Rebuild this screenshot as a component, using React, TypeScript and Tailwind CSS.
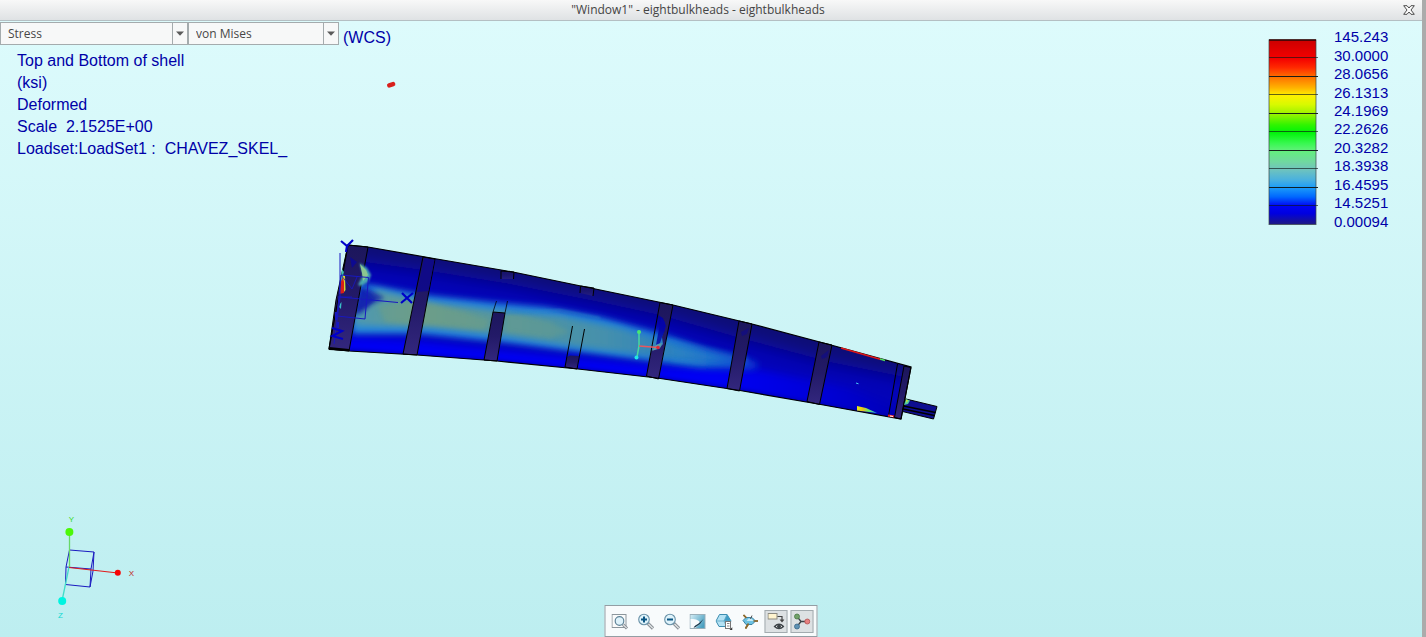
import type { ReactNode } from "react";

const legendValues = [
  "145.243",
  "30.0000",
  "28.0656",
  "26.1313",
  "24.1969",
  "22.2626",
  "20.3282",
  "18.3938",
  "16.4595",
  "14.5251",
  "0.00094",
];

const legendStops: [string, string][] = [
  ["0%", "#cc0000"],
  ["10%", "#f40000"],
  ["15%", "#ff2a00"],
  ["20%", "#ff7000"],
  ["26%", "#ffb400"],
  ["30%", "#fff000"],
  ["35%", "#d8fa00"],
  ["40%", "#9cf200"],
  ["46%", "#30f400"],
  ["50%", "#00f408"],
  ["56%", "#38f850"],
  ["60%", "#62f07c"],
  ["66%", "#70d8a0"],
  ["70%", "#70c4bc"],
  ["76%", "#48b0e0"],
  ["80%", "#1c9cf8"],
  ["85%", "#0068ff"],
  ["90%", "#0004f4"],
  ["94%", "#0000e0"],
  ["100%", "#201a80"],
];

function Combo({ label, options, className }: { label: string; options: string[]; className: string }) {
  return (
    <div className={`relative border border-[#a4abad] bg-[#f7f8f8] ${className}`}>
      <select
        aria-label={label}
        className="block h-[21px] w-full appearance-none bg-transparent pl-[7px] pr-5 text-xs text-[#474747] outline-none"
      >
        {options.map((o) => (
          <option key={o}>{o}</option>
        ))}
      </select>
      <span className="pointer-events-none absolute inset-y-0 right-0 flex w-[15px] items-center justify-center border-l border-[#a4abad]">
        <svg width="8" height="5" viewBox="0 0 8 5" aria-hidden="true">
          <path d="M0 0.500h8L4 4.800z" fill="#5a5a5a" />
        </svg>
      </span>
    </div>
  );
}

function Legend() {
  return (
    <div className="flex gap-4 pt-[7px]">
      <svg className="mt-[11px]" width="50" height="187" viewBox="0 0 50 187" role="img" aria-label="Stress scale">
        <defs>
          <linearGradient id="scale" x1="0" y1="0" x2="0" y2="1">
            {legendStops.map(([offset, color]) => (
              <stop key={offset} offset={offset} stopColor={color} />
            ))}
          </linearGradient>
        </defs>
        <rect x="1" y="1" width="47" height="184.500" fill="url(#scale)" stroke="#3a4444" strokeOpacity="0.700" />
        {legendValues.slice(1, -1).map((v, i) => (
          <path
            key={v}
            d={`M1 ${Math.round(1 + (i + 1) * 18.45) - 0.5}H50.5`}
            stroke="#101818"
            strokeOpacity={i % 2 ? 0.95 : 0.65}
          />
        ))}
        <path d="M1 1h47" stroke="#300" strokeWidth="1.400" />
      </svg>
      <ol className="grid h-[203px] w-14 auto-rows-fr items-center text-[15px] leading-4">
        {legendValues.map((v) => (
          <li key={v}>{v}</li>
        ))}
      </ol>
    </div>
  );
}

const hull =
  "M348 245L368 247L431 258L513 272L593 288.500L673 305L752 324L831 345L911 367L901 419L818 404L740 390.500L657 378L578 369L497 361L417 355L349 351L329 349Z";

function Model() {
  return (
    <svg
      className="absolute left-[320px] top-[49px]"
      width="630"
      height="360"
      viewBox="320 70 630 360"
      role="img"
      aria-label="Deformed shell model"
    >
      <defs>
        <clipPath id="hull">
          <path d={hull} />
        </clipPath>
        <filter id="b1" x="-20%" y="-20%" width="140%" height="140%">
          <feGaussianBlur stdDeviation="1" />
        </filter>
        <filter id="b2" x="-20%" y="-40%" width="140%" height="180%">
          <feGaussianBlur stdDeviation="2.200" />
        </filter>
        <filter id="b3" x="-20%" y="-40%" width="140%" height="180%">
          <feGaussianBlur stdDeviation="3.200" />
        </filter>
        <filter id="b4" x="-20%" y="-40%" width="140%" height="180%">
          <feGaussianBlur stdDeviation="4.500" />
        </filter>
        <filter id="b8" x="-20%" y="-60%" width="140%" height="220%">
          <feGaussianBlur stdDeviation="9" />
        </filter>
        <linearGradient id="bandOuter" gradientUnits="userSpaceOnUse" x1="350" y1="0" x2="755" y2="0">
          <stop offset="0" stopColor="#2384dc" />
          <stop offset="0.650" stopColor="#1f80dc" />
          <stop offset="0.850" stopColor="#146cd4" />
          <stop offset="1" stopColor="#0c48d8" stopOpacity="0.700" />
        </linearGradient>
        <linearGradient id="bandInner" gradientUnits="userSpaceOnUse" x1="350" y1="0" x2="740" y2="0">
          <stop offset="0" stopColor="#4a98b4" />
          <stop offset="0.180" stopColor="#669c90" />
          <stop offset="0.400" stopColor="#5496a0" />
          <stop offset="0.650" stopColor="#4590ac" />
          <stop offset="0.850" stopColor="#2a80c0" />
          <stop offset="1" stopColor="#1868cc" stopOpacity="0.600" />
        </linearGradient>
        <linearGradient id="lower" gradientUnits="userSpaceOnUse" x1="330" y1="0" x2="905" y2="0">
          <stop offset="0" stopColor="#0000f4" />
          <stop offset="0.680" stopColor="#0000f4" />
          <stop offset="0.850" stopColor="#0202d8" />
          <stop offset="1" stopColor="#0404b4" />
        </linearGradient>
        <linearGradient id="rib" x1="0" y1="0" x2="0" y2="1">
          <stop offset="0" stopColor="#1c165c" />
          <stop offset="0.500" stopColor="#231a68" />
          <stop offset="1" stopColor="#33277e" />
        </linearGradient>
        <linearGradient id="hot" x1="0" y1="0" x2="1" y2="0">
          <stop offset="0" stopColor="#e8f010" />
          <stop offset="0.300" stopColor="#e8c020" />
          <stop offset="0.550" stopColor="#70e860" />
          <stop offset="1" stopColor="#20b0f0" />
        </linearGradient>
      </defs>

      <rect x="387" y="82.500" width="8.500" height="4.600" rx="2.200" fill="#d8201c" transform="rotate(-17 391 85)" />

      <g clipPath="url(#hull)">
        <path d={hull} fill="#0303b8" />
        {/* dark upper skin */}
        <path
          d="M335 225L520 250L760 305L925 350L920 380L830 362L740 338L660 315L590 300L510 284L430 271L350 260Z"
          fill="#0f0a74"
          filter="url(#b8)"
        />
        {/* bright lower skin */}
        <path
          d="M340 336L420 341L500 350L580 358L660 366L760 370L850 388L900 408L900 425L815 410L740 396L655 384L575 374L495 366L330 356Z"
          fill="url(#lower)"
          filter="url(#b4)"
        />
        <path
          d="M330 350L417 356L497 362L578 370L657 379L740 391L901 420"
          fill="none"
          stroke="#0a0aa0"
          strokeWidth="3"
          filter="url(#b2)"
        />
        {/* stress band */}
        <path
          d="M352 284L372 285L425 295L500 303L545 307L600 317L660 333L705 348L752 360L760 366L750 370L700 368L650 361L580 352L500 342L420 334L352 334Z"
          fill="url(#bandOuter)"
          filter="url(#b3)"
        />
        <path
          d="M356 302L378 290L425 302L500 311L560 316L620 328L680 346L740 360L700 363L650 356L580 347L500 335L430 327L354 326Z"
          fill="url(#bandInner)"
          filter="url(#b3)"
        />
        <path d="M378 306L420 300L490 320L484 330L430 325L385 322Z" fill="#74a080" opacity="0.450" filter="url(#b2)" />
        <path d="M506 312L550 322L570 332L550 338L506 332Z" fill="#74a080" opacity="0.350" filter="url(#b2)" />
        <path d="M506 313L560 310L600 318" fill="none" stroke="#2c88c8" strokeWidth="2" opacity="0.500" filter="url(#b1)" />
        <path
          d="M670 340L748 358M672 351L748 361M672 360L745 365"
          stroke="#2a8ad4"
          strokeWidth="2"
          opacity="0.500"
          filter="url(#b2)"
        />
        {/* cool wedge beside the root rib */}
        <path d="M360 287L368 288L384 298L372 304L360 314L352 314Z" fill="#0812a8" opacity="0.750" filter="url(#b2)" />
        <path d="M361 289L369 294L375 300L366 307L358 310Z" fill="#0a18b4" opacity="0.500" filter="url(#b1)" />
      </g>

      <g stroke="#000" strokeWidth="1" fill="url(#rib)" strokeLinejoin="round">
        <path d="M348 245L368 247L349 351L329 349L336 300Z" />
        <path d="M423 257L435 259L417 355L403 354Z" />
        <path d="M493 312L505 313L497 361L484 360Z" />
        <path d="M739 321L752 324L739.500 391L727 388.500Z" />
        <path d="M819 342L832 345L819.500 404.500L807 401.500Z" />
        <path d="M493 312L496.500 301M505 313L507.500 301" fill="none" strokeOpacity="0.750" />
        <path d="M501 279V271L514 272L513.500 279" fillOpacity="0.600" />
        <path d="M580 293L580.500 286L594 288L593 296" fillOpacity="0.600" />
        <path d="M567 357L570 355.500L579 356L577 369L565 367Z" stroke="none" />
        <path d="M572.500 326L565 367L577 369L584.500 329" fill="none" />
        <path
          d="M660 303L673 305L664 350L658.500 379L646.500 376L651.500 350L659 349L663 344L662 337L666 326L663 318L658 315Z"
          stroke="none"
        />
        <path d="M660 302.500L673 305L658.500 379L646.500 376Z" fill="none" />
        <path d="M904 366L911 367.500L901 419L894.500 417.500Z" />
        <path d="M897.500 364L888.500 416" fill="none" />
      </g>
      <path d="M661 318L665 322L665 330L662 337L660 343L656 345Z" fill="#0505a8" opacity="0.800" />
      <path d="M656 345L662 343L660 348L652 351Z" fill="#5c9aa8" />
      <path d="M424 258L434.500 260L428.500 291L417 292Z" fill="#0c0890" opacity="0.800" />
      <path d="M741 332L749 328L747 334L742 336Z" fill="#100c88" opacity="0.700" />
      <path d="M821 356L829 350L827 357L822 359Z" fill="#100c88" opacity="0.700" />

      {/* root stress concentration */}
      <path d="M359.500 263L367 268L371 275L368 282L361 286L358 285L363 275Z" fill="#48a8b0" filter="url(#b1)" />
      <path d="M360 264L366 270L368 275L363 281L362 273Z" fill="#8cc890" />
      <path d="M350 257L357 262L352 268Z" fill="#0d0a90" />

      <path d={hull} fill="none" stroke="#000" strokeWidth="1.200" />
      <path d="M329 347L349 349L350 351L329 350Z" fill="#000" />

      <path d="M841 348L881 359.500" stroke="#e01818" strokeWidth="1.400" />
      <path d="M880 359L885 360.500" stroke="#50e060" strokeWidth="1.400" />
      <path d="M857 406L866 408L877 413L857 410.500Z" fill="url(#hot)" />
      <path d="M888 415.500L894 416.500" stroke="#f02020" strokeWidth="2" />
      <path d="M890 416L893 416.500" stroke="#fff" strokeWidth="1" />
      <path d="M856 383L858.500 383.800" stroke="#48c8f8" strokeWidth="1" />

      {/* tail stub */}
      <path d="M906 399L937 406.500L933.500 419L902.500 411.500Z" fill="#0e0e90" stroke="#000" />
      <path d="M903.500 406L935.500 412.500M903 409L934.500 415.500" stroke="#000" strokeWidth="1.300" />
      <path d="M906 399L910 400.500L908 404L904 405Z" fill="#50c8a0" />
      <path d="M906 399.500L908 400.500L906.500 403Z" fill="#d8e830" />

      {/* hot spot on the root edge */}
      <path d="M342 275L344.500 279L344 293L339 294Z" fill="#d82018" />
      <path d="M342 274L345 276L345.500 290L344 292L344 282Z" fill="#d8d830" />
      <path d="M342 269L344 272L342 279L340 284Z" fill="#38c0b0" />
      <path d="M340 304L341.500 302L341 309L339 307Z" fill="#38c0c8" />

      {/* part coordinate system */}
      <g fill="none" stroke="#1818c0" strokeWidth="1">
        <path d="M340 253V297L398 302.500M340 297L334 344" />
        <path d="M341 275L368.500 277.500L365 319L337 316Z" />
        <path d="M338 297H352M341 275L352 289L357 277" strokeOpacity="0.800" />
        <path d="M336 312V320M338 322V328" strokeWidth="2" />
      </g>
      <g fill="none" stroke="#0000c8" strokeWidth="2.200">
        <path d="M341 241L347 246L353 240M347 246L346 252" />
        <path d="M402 293L412 303M413 293L401 303" />
        <path d="M332 328L342 331L332.500 336L343 339" />
      </g>

      {/* spin centre */}
      <path d="M639 332V346L637 357" fill="none" stroke="#48d8a0" strokeWidth="1.500" />
      <path d="M639 346L658 347.500" stroke="#e85860" strokeWidth="1.500" />
      <circle cx="639" cy="332" r="2" fill="#48e870" />
      <circle cx="636.500" cy="357.500" r="2" fill="#20e8e8" />
      <circle cx="658" cy="347.500" r="1.800" fill="#e02838" />
    </svg>
  );
}

function Triad() {
  return (
    <svg
      className="absolute bottom-4 left-[50px]"
      width="90"
      height="110"
      viewBox="50 511 90 110"
      role="img"
      aria-label="Orientation axes"
    >
      <g fill="none" stroke="#1a1ac0" strokeWidth="1">
        <path d="M69.500 550L94 552L91 569L66 567Z" />
        <path d="M66 567L65.500 584.500L90 587L91 569M94 552L93 571L90 587" />
      </g>
      <path d="M69.500 532V567" stroke="#68d868" strokeWidth="1.300" />
      <path d="M69 567L62 601" stroke="#40dcc8" strokeWidth="1.300" />
      <path d="M69 567.500L118 573" stroke="#e01c1c" strokeWidth="1.200" />
      <circle cx="69.400" cy="532" r="4" fill="#4cf808" />
      <circle cx="62.200" cy="601" r="4" fill="#00f4e0" />
      <circle cx="117.800" cy="572.800" r="3" fill="#f80404" />
      <g fontSize="8" textAnchor="middle">
        <text x="71.500" y="522" fill="#38d818">Y</text>
        <text x="131.500" y="576" fill="#c02020">X</text>
        <text x="60.500" y="618" fill="#10d8d0">Z</text>
      </g>
    </svg>
  );
}

function Magnifier({ sign }: { sign: string }) {
  return (
    <>
      <path d="M10.500 10.500L15.500 15.500" stroke="#858c92" strokeWidth="3.200" />
      <path d="M11 11L15.300 15.300" stroke="#e0e3e4" strokeWidth="1.400" />
      <circle cx="6.500" cy="6.500" r="5.300" fill="#dff3fb" stroke="#6a92a8" strokeWidth="1.100" />
      <path d={sign} stroke="#0b5684" strokeWidth="2" />
    </>
  );
}

const tools: { name: string; pressed?: boolean; art: ReactNode }[] = [
  {
    name: "Refit",
    art: (
      <>
        <rect x="0.500" y="1.500" width="14" height="13" fill="#fafbfb" stroke="#8c969c" />
        <path d="M11.500 11.500L15.500 15.500" stroke="#858c92" strokeWidth="3" />
        <path d="M11.500 11.500L15.200 15.200" stroke="#e0e3e4" strokeWidth="1.200" />
        <circle cx="8" cy="8" r="4.300" fill="#dff3fb" stroke="#5f8498" strokeWidth="1.200" />
      </>
    ),
  },
  { name: "Zoom in", art: <Magnifier sign="M3.500 6.500h6M6.500 3.500v6" /> },
  { name: "Zoom out", art: <Magnifier sign="M3.500 6.500h6" /> },
  {
    name: "Repaint",
    art: (
      <>
        <rect x="0.500" y="1.500" width="15" height="14" fill="url(#paint)" stroke="#9ab0ba" />
        <path d="M1 6C8 6 11 8 10 11L6 15H1Z" fill="#f6fbfd" />
        <path d="M14 6L10.500 11L5.500 14.500L4 14.500L5.500 12.800L9 10.500Z" fill="#1c3c50" />
      </>
    ),
  },
  {
    name: "Saved orientations",
    art: (
      <>
        <path d="M0.500 8L4 1.500H11.500L15.500 8L12 13.500H3.500Z" fill="#b4e2f4" stroke="#3d8db0" strokeLinejoin="round" />
        <path d="M11.500 1.500L15.500 8H8.500Z" fill="#3f9cc4" />
        <path d="M0.500 8H15.500M8.500 8L11.500 1.500M8.500 8L11 13.500" stroke="#5ca6c4" strokeWidth="0.800" />
        <rect x="10" y="8.500" width="5" height="7" fill="#fff" stroke="#777" />
        <path d="M11.500 10.500h2.500M11.500 13h2.500" stroke="#777" strokeWidth="0.900" />
        <path d="M17 14V17H14Z" fill="#333" />
      </>
    ),
  },
  {
    name: "Datum display filters",
    art: (
      <>
        <path d="M2 2L7 7M4 15.500L7.500 10M11 8H16.500" stroke="#8e6a2c" strokeWidth="1.700" />
        <path d="M1.500 7.500L4.500 4.500H10.500L14 8L10.500 11.500H4.500Z" fill="#6cc2e2" stroke="#3a83a6" strokeLinejoin="round" />
        <path d="M5 8L7 5.500H10L12 8Z" fill="#c4eaf8" />
        <path d="M2 2L5 5M4 15.500L7 10.500M12 8H16.500" stroke="#8e6a2c" strokeWidth="1.500" />
        <path d="M10.500 2.500L9 6" stroke="#555" />
      </>
    ),
  },
  {
    name: "Annotation display",
    pressed: true,
    art: (
      <>
        <rect x="0.500" y="0.500" width="9" height="5.500" fill="#fff4cf" stroke="#8c8a80" />
        <path d="M10 3.500H14.500V8" fill="none" stroke="#444" strokeWidth="1.200" />
        <path d="M12 6.500H17L14.500 9.500Z" fill="#444" />
        <path d="M7 13.500Q11.500 9 16 13.500Q11.500 17.500 7 13.500Z" fill="#fff" stroke="#3e4448" strokeWidth="1.300" />
        <circle cx="11.500" cy="13.300" r="1.900" fill="#3e4448" />
      </>
    ),
  },
  {
    name: "Spin center",
    pressed: true,
    art: (
      <>
        <path d="M3.500 3.500L7.500 8.500L13.500 8.500M7.500 8.500L3.500 13.500" fill="none" stroke="#3b4246" strokeWidth="1.300" />
        <circle cx="3.500" cy="3.500" r="2.500" fill="#72a26a" stroke="#4a7846" strokeWidth="0.800" />
        <circle cx="13.800" cy="8.500" r="2.500" fill="#e88080" stroke="#b05050" strokeWidth="0.800" />
        <circle cx="3.500" cy="13.500" r="2.500" fill="#5e92b4" stroke="#3a6888" strokeWidth="0.800" />
      </>
    ),
  },
];

function Toolbar() {
  return (
    <div
      role="toolbar"
      aria-label="View"
      className="absolute bottom-0 left-1/2 flex -translate-x-1/2 gap-[3px] border border-[#939ea4] bg-[#f8fbfc] px-[3px] pb-[3px] pt-1"
    >
      {tools.map((t) => (
        <button
          key={t.name}
          type="button"
          aria-label={t.name}
          aria-pressed={t.pressed}
          className={`flex h-[23px] w-[23px] items-center justify-center border ${
            t.pressed ? "border-[#a3abaf] bg-[#dde1e3]" : "border-transparent"
          }`}
        >
          <svg className="shrink-0" width="17" height="17" viewBox="0 0 17 17" fill="none" aria-hidden="true">
            <defs>
              <linearGradient id="paint" x1="0" y1="0" x2="1" y2="0.600">
                <stop offset="0" stopColor="#d8eff7" />
                <stop offset="1" stopColor="#4aa0c0" />
              </linearGradient>
            </defs>
            {t.art}
          </svg>
        </button>
      ))}
    </div>
  );
}

export default function App() {
  return (
    <div className="flex min-h-screen flex-col border-r-4 border-[#ababab] font-['Open_Sans','Noto_Sans',sans-serif]">
      <header className="flex h-[21px] items-center border-b border-[#b4bfc3] bg-linear-to-b from-[#f8f8f8] to-[#dfe2e4] text-xs text-[#444]">
        <h1 className="flex-1 text-center">"Window1" - eightbulkheads - eightbulkheads</h1>
        <button type="button" aria-label="Close" className="flex w-[26px] items-center justify-end pr-[7px]">
          <svg width="12" height="10" viewBox="0 0 12 10" aria-hidden="true">
            <path
              d="M0.700 0.700H4L6 3L8 0.700H11.300L8 5L11.300 9.300H8L6 7L4 9.300H0.700L4 5Z"
              fill="#fafafa"
              stroke="#4c4c4c"
              strokeWidth="1"
            />
          </svg>
        </button>
      </header>

      <main className="relative flex flex-1 items-start justify-between bg-linear-to-b from-[#ddfbfc] to-[#bdeef0] pr-8 font-['Liberation_Sans',Arial,sans-serif] text-base text-[#0000a8]">
        <Model />
        <section className="relative">
          <div className="flex items-start pt-px font-['Open_Sans','Noto_Sans',sans-serif]">
            <Combo label="Result quantity" options={["Stress", "Displacement", "Strain"]} className="w-[188px]" />
            <Combo label="Result component" options={["von Mises", "Max Principal", "Min Principal"]} className="w-[151px]" />
            <span className="pl-1 pt-1 font-['Liberation_Sans',Arial,sans-serif]">(WCS)</span>
          </div>
          <div className="whitespace-pre pl-[17px] leading-[22px]">
            <p>Top and Bottom of shell</p>
            <p>(ksi)</p>
            <p>Deformed</p>
            <p>{"Scale  2.1525E+00"}</p>
            <p>{"Loadset:LoadSet1 :  CHAVEZ_SKEL_"}</p>
          </div>
        </section>
        <Legend />
        <Triad />
        <Toolbar />
      </main>
    </div>
  );
}
